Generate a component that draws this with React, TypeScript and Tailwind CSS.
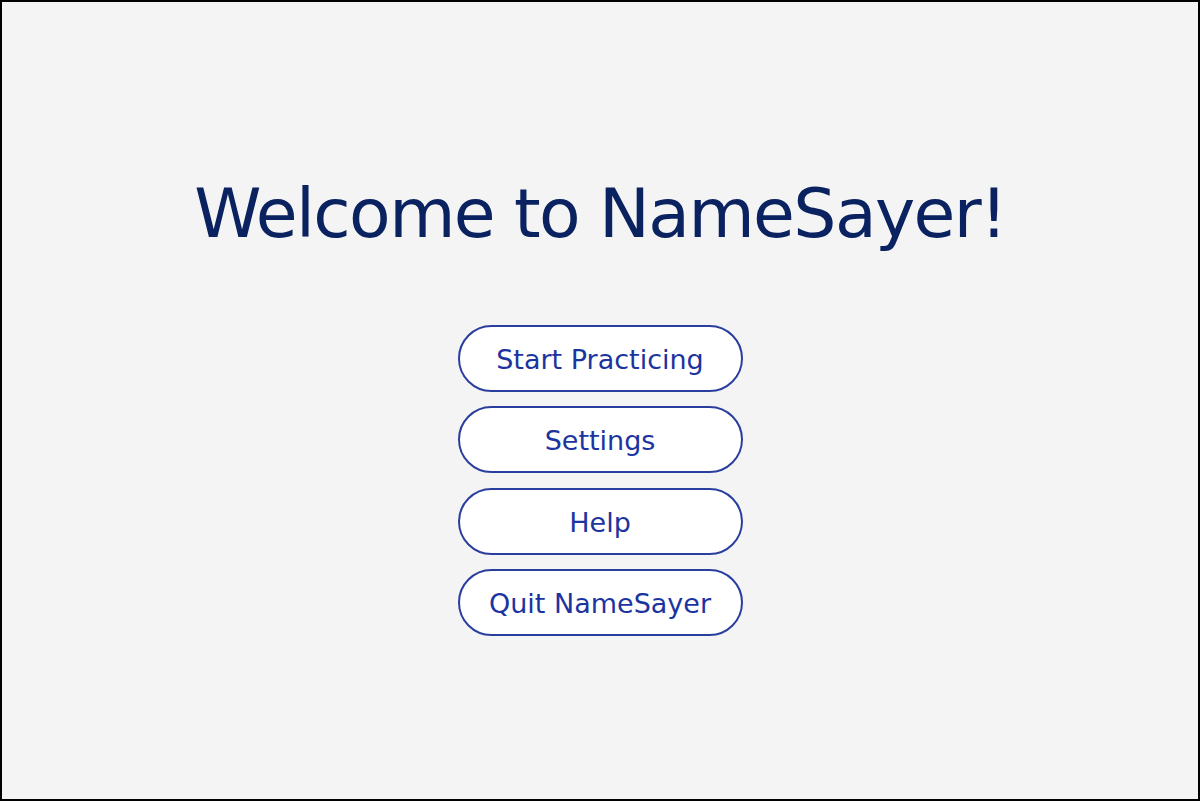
export default function App() {
  const buttons = ["Start Practicing", "Settings", "Help", "Quit NameSayer"];

  return (
    <div className="w-[1200px] h-[801px] border-2 border-black bg-[#f4f4f4] flex flex-col items-center font-['DejaVu_Sans',sans-serif]">
      <h1 className="mt-[172px] text-[68px] leading-[80px] tracking-[-1.6px] text-[#0b2260]">Welcome to NameSayer!</h1>
      <div className="mt-[71px] flex flex-col gap-[14.4px]">
        {buttons.map((b) => (
          <button
            key={b}
            className="w-[285px] h-[67px] pt-[3px] rounded-full border-2 border-[#2a3e9e] bg-white text-[27px] text-[#1c34a0]"
          >
            {b}
          </button>
        ))}
      </div>
    </div>
  );
}
